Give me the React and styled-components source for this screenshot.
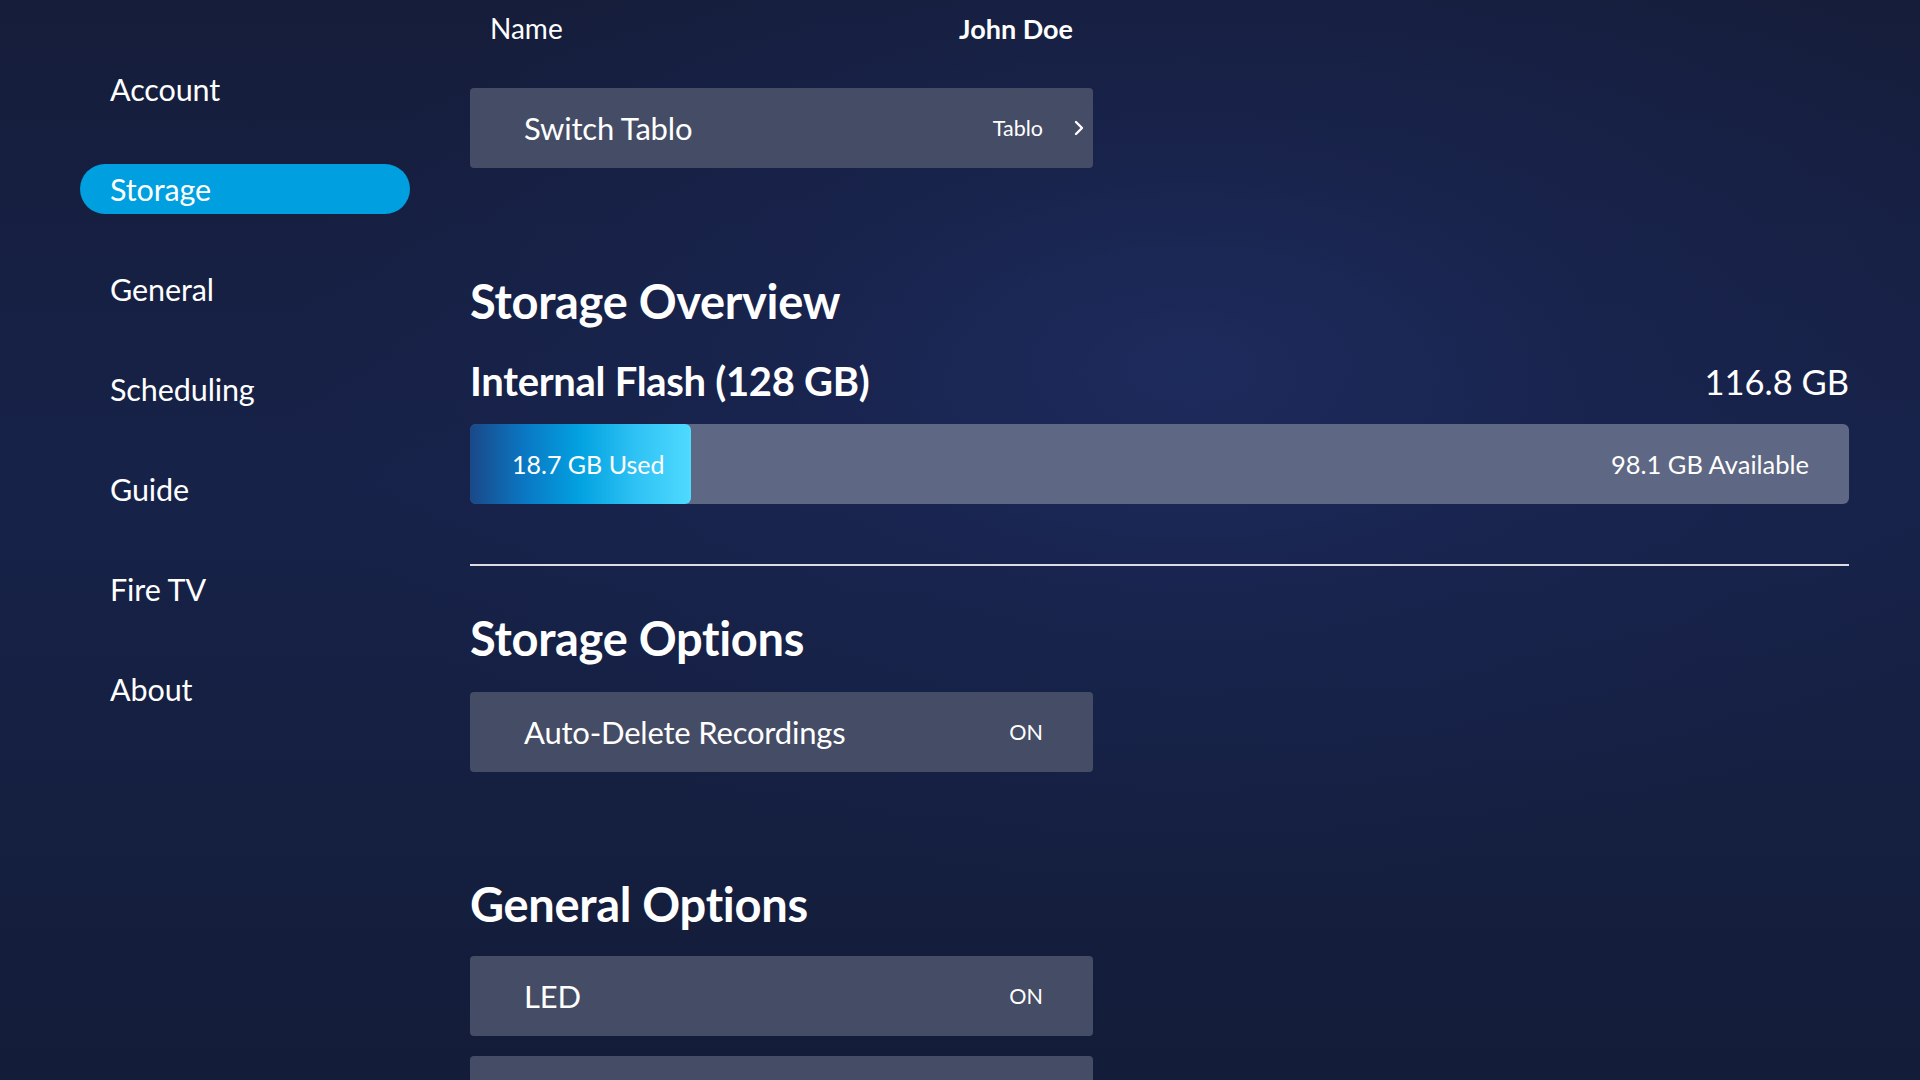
import React from "react";
import styled, { createGlobalStyle } from "styled-components";

const Global = createGlobalStyle`
  html, body { margin: 0; padding: 0; }
  body {
    width: 1920px;
    height: 1080px;
    overflow: hidden;
    font-family: Lato, "Open Sans", sans-serif;
    color: #ffffff;
    background: #141d3a;
  }
  * { box-sizing: border-box; }
`;

const Screen = styled.div`
  width: 1920px;
  height: 1080px;
  display: flex;
  overflow: hidden;
  background:
    radial-gradient(ellipse 900px 520px at 62% 34%, rgba(30, 44, 96, 0.85) 0%, rgba(26, 38, 84, 0.55) 45%, rgba(20, 29, 58, 0) 100%),
    linear-gradient(180deg, #151d3a 0%, #172249 45%, #131c38 100%);
`;

const Sidebar = styled.nav`
  width: 470px;
  flex: none;
  padding: 64px 60px 0 80px;
  display: flex;
  flex-direction: column;
  gap: 50px;
`;

const NavItem = styled.div`
  height: 50px;
  width: 330px;
  flex: none;
  border-radius: 25px;
  padding: 0 30px;
  display: flex;
  align-items: center;
  font-size: 30.5px;
  letter-spacing: -0.1px;
  background: ${(p) => (p.$active ? "#009fdf" : "transparent")};
`;

const Main = styled.main`
  flex: 1;
  padding-right: 71px;
  display: flex;
  flex-direction: column;
  & > * { flex-shrink: 0; }
`;

const NameRow = styled.div`
  width: 623px;
  height: 56px;
  padding: 0 20px;
  display: flex;
  align-items: center;
  justify-content: space-between;
  font-size: 28px;
`;

const NameValue = styled.span`
  font-weight: 700;
  font-size: 27px;
`;

const OptionRow = styled.div`
  width: 623px;
  height: 80px;
  flex: none;
  margin-top: ${(p) => p.$mt || 0}px;
  background: #454c65;
  border-radius: 4px;
  display: flex;
  align-items: center;
  padding: 0 ${(p) => (p.$chevron ? 8 : 50)}px 0 54px;
`;

const OptionLabel = styled.span`
  flex: 1;
  font-size: 31px;
  letter-spacing: -0.2px;
`;

const OptionValue = styled.span`
  font-size: 21.5px;
`;

const Chevron = styled.svg`
  width: 12px;
  height: 16px;
  margin-left: 30px;
`;

const Section = styled.section`
  margin-top: ${(p) => p.$mt}px;
  display: flex;
  flex-direction: column;
  & > * { flex-shrink: 0; }
`;

const Heading = styled.h2`
  margin: 0;
  height: 56px;
  line-height: 56px;
  font-size: 47px;
  font-weight: 700;
  letter-spacing: -0.3px;
`;

const DriveHeader = styled.div`
  margin-top: 27px;
  height: 50px;
  display: flex;
  align-items: center;
  justify-content: space-between;
`;

const DriveName = styled.span`
  font-size: 40px;
  font-weight: 700;
  letter-spacing: -0.3px;
`;

const DriveSize = styled.span`
  font-size: 34.5px;
`;

const Bar = styled.div`
  margin-top: 18px;
  height: 80px;
  border-radius: 6px;
  background: #5e6783;
  display: flex;
  align-items: center;
`;

const BarFill = styled.div`
  height: 100%;
  flex: none;
  border-radius: 6px;
  background: linear-gradient(90deg, #1a4888 0%, #0a78c4 25%, #02a2e1 50%, #2fc2f4 75%, #4fdaff 100%);
  display: flex;
  align-items: center;
  padding-left: 42px;
  font-size: 25px;
  white-space: nowrap;
`;

const BarRest = styled.div`
  flex: 1;
  text-align: right;
  padding-right: 40px;
  font-size: 25.5px;
`;

const Divider = styled.hr`
  margin: 60px 0 0;
  border: none;
  height: 2px;
  background: #dcdde4;
`;

const Block = styled.div`
  display: flex;
  flex-direction: column;
  margin-top: ${(p) => p.$mt}px;
  & > * { flex-shrink: 0; }
`;

export default function App() {
  const nav = ["Account", "Storage", "General", "Scheduling", "Guide", "Fire TV", "About"];
  const usedPct = (18.7 / 116.8) * 100;
  return (
    <>
      <Global />
      <Screen>
        <Sidebar>
          {nav.map((n) => (
            <NavItem key={n} $active={n === "Storage"}>
              {n}
            </NavItem>
          ))}
        </Sidebar>
        <Main>
          <NameRow>
            <span>Name</span>
            <NameValue>John Doe</NameValue>
          </NameRow>
          <OptionRow $mt={32} $chevron>
            <OptionLabel>Switch Tablo</OptionLabel>
            <OptionValue>Tablo</OptionValue>
            <Chevron viewBox="0 0 12 16">
              <path d="M3 2 L9 8 L3 14" fill="none" stroke="#ffffff" strokeWidth="2.4" strokeLinecap="round" strokeLinejoin="round" />
            </Chevron>
          </OptionRow>

          <Section $mt={105}>
            <Heading>Storage Overview</Heading>
            <DriveHeader>
              <DriveName>Internal Flash (128 GB)</DriveName>
              <DriveSize>116.8 GB</DriveSize>
            </DriveHeader>
            <Bar>
              <BarFill style={{ width: `${usedPct}%` }}>18.7 GB Used</BarFill>
              <BarRest>98.1 GB Available</BarRest>
            </Bar>
            <Divider />
          </Section>

          <Block $mt={44}>
            <Heading>Storage Options</Heading>
            <OptionRow $mt={26}>
              <OptionLabel>Auto-Delete Recordings</OptionLabel>
              <OptionValue>ON</OptionValue>
            </OptionRow>
          </Block>

          <Block $mt={104}>
            <Heading>General Options</Heading>
            <OptionRow $mt={24}>
              <OptionLabel>LED</OptionLabel>
              <OptionValue>ON</OptionValue>
            </OptionRow>
            <OptionRow $mt={20}>
              <OptionLabel>&nbsp;</OptionLabel>
            </OptionRow>
          </Block>
        </Main>
      </Screen>
    </>
  );
}
